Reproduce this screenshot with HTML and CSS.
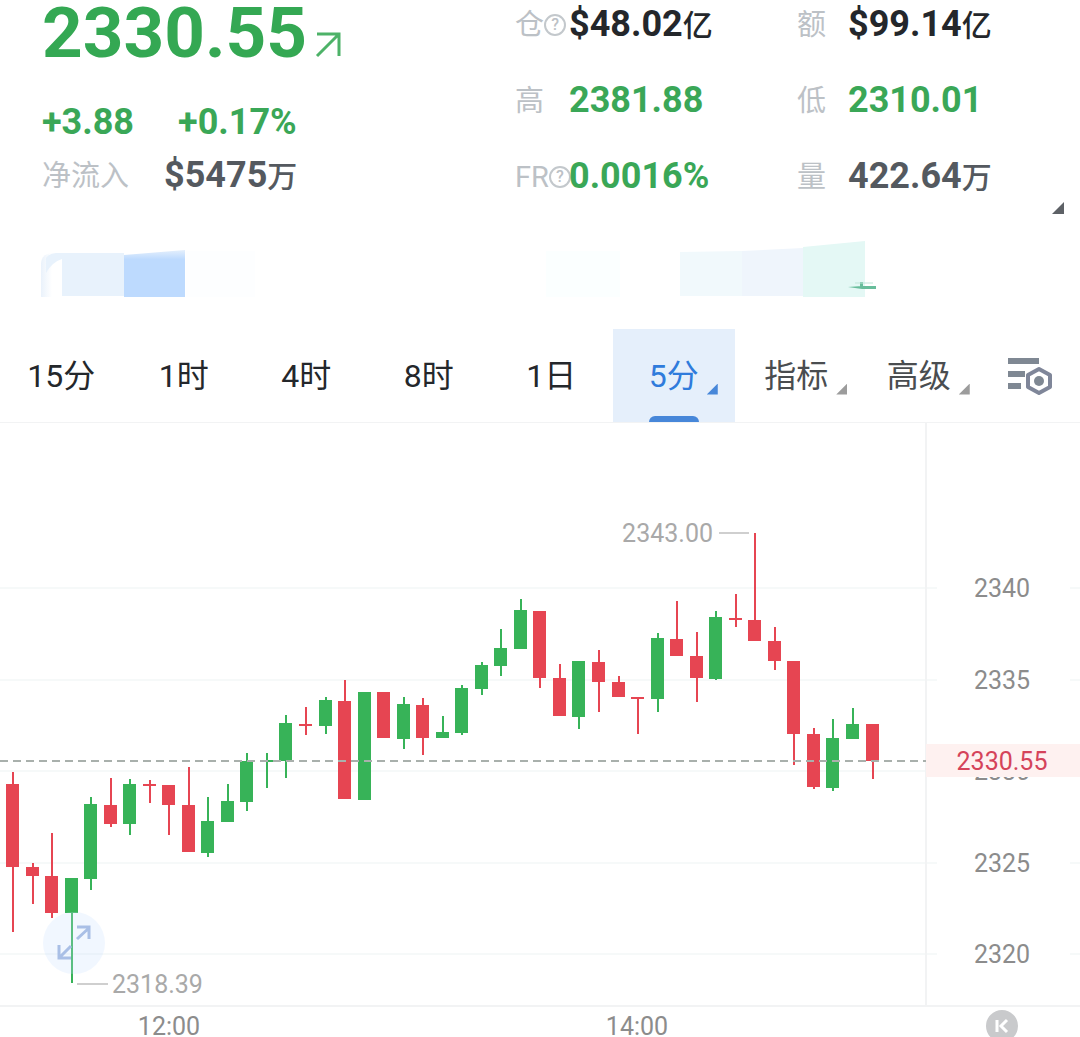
FILE: index.html
```html
<!DOCTYPE html>
<html lang="zh-CN">
<head>
  <meta charset="UTF-8" />
  <meta name="viewport" content="width=device-width, initial-scale=1" />
  <title>行情 2330.55</title>
  <link rel="stylesheet" href="styles.css">
</head>
<body>

  <!-- Quote -->
  <header class="quote">
    <div class="summary">
      <h1 class="price">2330.55
        <svg class="trend" viewBox="0 0 26 26" aria-hidden="true"><path d="M2 24 L23 3 M2 2 H24 V24" /></svg>
      </h1>
      <p class="change"><span>+3.88</span><span>+0.17%</span></p>
      <p class="inflow"><span class="label">净流入</span><span class="value muted">$5475<small>万</small></span></p>
    </div>

    <dl class="stats">
      <div class="stat"><dt class="label">仓<span class="help">?</span></dt><dd class="value">$48.02<small>亿</small></dd></div>
      <div class="stat"><dt class="label">高</dt><dd class="value up">2381.88</dd></div>
      <div class="stat"><dt class="label">FR<span class="help">?</span></dt><dd class="value up">0.0016%</dd></div>
    </dl>

    <dl class="stats narrow">
      <div class="stat"><dt class="label">额</dt><dd class="value">$99.14<small>亿</small></dd></div>
      <div class="stat"><dt class="label">低</dt><dd class="value up">2310.01</dd></div>
      <div class="stat"><dt class="label">量</dt><dd class="value muted">422.64<small>万</small></dd></div>
    </dl>
  </header>

  <div class="more">
    <button class="more-btn" type="button" aria-label="更多"></button>
  </div>

  <svg class="strip" viewBox="0 0 1080 80" aria-hidden="true">
    <defs>
      <linearGradient id="edge" x1="0" x2="1">
        <stop offset="0" stop-color="#eaf2fb" />
        <stop offset="0.5" stop-color="#fff" />
      </linearGradient>
      <linearGradient id="fold" x1="0" y1="0" x2="0" y2="1">
        <stop offset="0" stop-color="#e4effc" />
        <stop offset="0.2" stop-color="#bddafe" />
      </linearGradient>
    </defs>
    <path d="M41 66 V32 Q42 22 54 22 H63 V66 Z" fill="url(#edge)" />
    <path d="M46 27 Q50 22 56 22 H124 V65 H62 V28 Q52 31 46 42 Z" fill="#e8f2fc" />
    <path d="M124 24 L185 19 V66 H124 Z" fill="url(#fold)" />
    <path d="M186 20 H255 V66 H186 Z" fill="#fdfeff" />
    <path d="M546 20 H620 V66 H546 Z" fill="#fbffff" />
    <path d="M680 21 L742 20 V65 H680 Z" fill="#f1f9fc" />
    <path d="M742 20 L803 17 V65 H742 Z" fill="#eff5fc" />
    <path d="M803 16 L865 10 V66 H803 Z" fill="#e4f8f5" />
    <path d="M848 56 L862 55 H876 V58 H862 Z M860 51 H863 V56 H860 Z" fill="#68bd9b" />
    <path d="M855 52 H873" stroke="#bfe5d8" />
  </svg>

  <!-- Intervals -->
  <nav class="tabs">
    <button class="tab" type="button">15分</button>
    <button class="tab" type="button">1时</button>
    <button class="tab" type="button">4时</button>
    <button class="tab" type="button">8时</button>
    <button class="tab" type="button">1日</button>
    <button class="tab active" type="button"><span class="drop">5分</span></button>
    <button class="tab menu" type="button"><span class="drop">指标</span></button>
    <button class="tab menu" type="button"><span class="drop">高级</span></button>
    <button class="tab settings" type="button" aria-label="设置">
      <svg viewBox="0 0 46 40" aria-hidden="true">
        <path d="M1 2 H32 V8 H1 Z M1 15 H18 V21 H1 Z M1 27 H14 V33 H1 Z" fill="#7f8893" />
        <path d="M32 13 L43 19 V31 L32 37 L21 31 V19 Z" fill="#fff" stroke="#7f8699" stroke-width="4" stroke-linejoin="round" />
        <circle cx="32" cy="25" r="5" fill="#7f8893" />
      </svg>
    </button>
  </nav>

  <!-- Candles -->
  <main class="chart">
    <svg class="plot" viewBox="0 0 1080 614" role="img" aria-label="5分K线">
      <path class="grid" d="M0 165 H937 M0 257 H937 M0 348 H926 M0 440 H937 M0 531 H937 M1070 165 H1080 M1070 257 H1080 M1070 440 H1080 M1070 531 H1080" />
      <path class="frame" d="M926 0 V583 M0 583 H1080" />
      <g id="candles"></g>
      <path class="last-line" d="M0 338 H926" />

      <path class="pointer" d="M719 110 H749 M77 561 H108" />
      <text class="mark" x="713" y="119" text-anchor="end">2343.00</text>
      <text class="mark" x="112" y="570">2318.39</text>

      <g class="axis">
        <text x="1002" y="174">2340</text>
        <text x="1002" y="266">2335</text>
        <text x="1002" y="357">2330</text>
        <text x="1002" y="449">2325</text>
        <text x="1002" y="540">2320</text>
        <text x="169" y="612">12:00</text>
        <text x="637" y="612">14:00</text>
      </g>

      <rect class="last-bg" x="926" y="321" width="154" height="33" />
      <text class="last" x="1002" y="347">2330.55</text>
    </svg>

    <button class="expand" type="button" aria-label="全屏">
      <svg viewBox="0 0 62 62" aria-hidden="true"><path d="M34 27 L46 16 M34 15 H46 V27 M28 34 L17 45 M16 33 V46 H28" /></svg>
    </button>
    <button class="latest" type="button" aria-label="最新">
      <svg viewBox="0 0 32 32" aria-hidden="true"><path d="M11 10 V22 M21 10 L15 16 L21 22" /></svg>
    </button>
  </main>

  <script src="chart.js"></script>
</body>
</html>
```

FILE: styles.css
```css
* {
  box-sizing: border-box;
}

body {
  margin: 0;
  background: #fff;
  color: #24272b;
  font-family: Roboto, "Noto Sans CJK SC", sans-serif;
  overflow-x: hidden;
}

h1, p, dl, dd {
  margin: 0;
}

button {
  border: none;
  padding: 0;
  background: none;
  color: inherit;
  font-family: inherit;
  cursor: pointer;
}

/* Quote */
.quote {
  display: grid;
  grid-template-columns: 473fr 282fr 241fr;
  padding: 0 42px;
}

.summary {
  display: flex;
  flex-direction: column;
}

.price {
  display: flex;
  align-items: center;
  gap: 8px;
  margin-bottom: 36px;
  font-size: 71px;
  line-height: 66px;
  font-weight: 700;
  color: #34a853;
}

.trend {
  width: 26px;
  height: 26px;
  margin-top: 24px;
  fill: none;
  stroke: #4db268;
  stroke-width: 3;
}

.change {
  display: flex;
  gap: 44px;
  margin-bottom: 13px;
  font-size: 36px;
  line-height: 40px;
  font-weight: 700;
  color: #3aa757;
}

.inflow {
  display: flex;
  gap: 35px;
}

.stats {
  display: flex;
  flex-direction: column;
  gap: 34px;
  padding-top: 4px;
}

.stat {
  display: grid;
  grid-template-columns: 54px 1fr;
}

.narrow .stat {
  grid-template-columns: 51px 1fr;
}

.label {
  display: flex;
  align-items: center;
  font-size: 29px;
  line-height: 42px;
  font-weight: 400;
  color: #bcc1c6;
}

.help {
  flex: none;
  width: 22px;
  height: 22px;
  border: 2px solid #c3c8cc;
  border-radius: 50%;
  font-size: 16px;
  line-height: 18px;
  font-weight: 500;
  text-align: center;
}

.value {
  font-size: 36px;
  line-height: 40px;
  height: 40px;
  font-weight: 700;
  white-space: nowrap;
}

.value small {
  font-size: 30px;
  font-weight: 500;
}

.up {
  color: #3aa757;
}

.muted {
  color: #54595f;
}

.more {
  display: flex;
  justify-content: flex-end;
  padding: 4px 16px 17px;
}

.more-btn {
  width: 12px;
  height: 12px;
  background: #5d6166;
  clip-path: polygon(100% 0, 100% 100%, 0 100%);
}

.strip {
  display: block;
  width: 100%;
}

/* Intervals */
.tabs {
  display: grid;
  grid-template-columns: repeat(8, 1fr) 100px;
  margin-top: 18px;
  border-bottom: 1px solid #f2f3f4;
}

.tab {
  position: relative;
  height: 93px;
  font-size: 32px;
  line-height: 40px;
}

.tab.menu {
  color: #4a4d50;
}

.tab.active {
  background: #e5effb;
  color: #2f7bdc;
}

.tab.active::after {
  content: "";
  position: absolute;
  left: 36px;
  right: 36px;
  bottom: 0;
  height: 6px;
  border-radius: 6px 6px 0 0;
  background: #4787d9;
}

.drop {
  position: relative;
}

.drop::after {
  content: "";
  position: absolute;
  left: 100%;
  bottom: 0;
  width: 11px;
  height: 11px;
  margin-left: 8px;
  background: #9c9c9c;
  clip-path: polygon(100% 0, 100% 100%, 0 100%);
}

.active .drop::after {
  background: #4787d9;
}

.settings svg {
  display: block;
  width: 46px;
  margin: 0 auto;
}

/* Candles */
.chart {
  position: relative;
  overflow: hidden;
}

.plot {
  display: block;
  width: 100%;
}

.grid, .frame, .pointer, .last-line {
  fill: none;
  stroke-width: 2;
}

.grid {
  stroke: #f6f9f9;
}

.frame {
  stroke: #f2f3f4;
}

.pointer {
  stroke: #cfcfcf;
}

.last-line {
  stroke: #a9b0ac;
  stroke-dasharray: 8 5;
}

.candle-up {
  fill: #37b358;
}

.candle-down {
  fill: #e64552;
}

.mark, .axis, .last {
  font-size: 25px;
}

.mark {
  fill: #a9a9a9;
}

.axis {
  fill: #8c8c8c;
  text-anchor: middle;
}

.last {
  fill: #d5435a;
  text-anchor: middle;
}

.last-bg {
  fill: #fef1f0;
}

.expand {
  position: absolute;
  left: 4%;
  bottom: 63px;
  width: 62px;
  height: 62px;
  border-radius: 50%;
  background: rgba(200, 225, 255, 0.25);
}

.expand path, .latest path {
  fill: none;
  stroke: #a9bfe6;
  stroke-width: 3;
}

.latest {
  position: absolute;
  right: 62px;
  bottom: -5px;
  width: 32px;
  height: 32px;
  border-radius: 50%;
  background: #c9cacc;
}

.latest path {
  stroke: #fff;
}
```

FILE: chart.js
```js
// high, body top, body bottom, low, direction
const candles = [
  [349, 361, 444, 509, 'down'],
  [440, 444, 453, 481, 'down'],
  [410, 453, 490, 495, 'down'],
  [455, 455, 490, 560, 'up'],
  [374, 381, 456, 467, 'up'],
  [355, 382, 401, 404, 'down'],
  [356, 361, 401, 412, 'up'],
  [357, 361, 363, 380, 'down'],
  [362, 362, 382, 412, 'down'],
  [344, 382, 429, 429, 'down'],
  [374, 398, 430, 434, 'up'],
  [361, 378, 399, 399, 'up'],
  [330, 338, 379, 388, 'up'],
  [330, 337, 339, 365, 'up'],
  [292, 300, 338, 355, 'up'],
  [284, 301, 303, 312, 'down'],
  [274, 277, 303, 311, 'up'],
  [257, 278, 376, 376, 'down'],
  [269, 269, 377, 377, 'up'],
  [269, 269, 315, 315, 'down'],
  [274, 281, 316, 326, 'up'],
  [275, 282, 315, 332, 'down'],
  [293, 309, 315, 315, 'up'],
  [262, 265, 310, 312, 'up'],
  [239, 242, 266, 272, 'up'],
  [206, 225, 243, 253, 'up'],
  [176, 187, 226, 226, 'up'],
  [188, 188, 255, 265, 'down'],
  [241, 255, 293, 293, 'down'],
  [238, 238, 294, 306, 'up'],
  [227, 239, 259, 289, 'down'],
  [253, 259, 274, 274, 'down'],
  [274, 274, 276, 311, 'down'],
  [210, 215, 276, 289, 'up'],
  [178, 216, 233, 233, 'down'],
  [209, 233, 255, 279, 'down'],
  [188, 194, 256, 257, 'up'],
  [171, 195, 197, 204, 'down'],
  [110, 197, 218, 218, 'down'],
  [204, 218, 238, 247, 'down'],
  [238, 238, 311, 342, 'down'],
  [305, 311, 364, 366, 'down'],
  [296, 315, 365, 368, 'up'],
  [285, 301, 316, 316, 'up'],
  [301, 301, 338, 356, 'down']
];

const group = document.getElementById('candles');
const step = 859.5 / (candles.length - 1);

function addRect(x, y, width, height, dir) {
  const rect = document.createElementNS('http://www.w3.org/2000/svg', 'rect');
  rect.setAttribute('x', x);
  rect.setAttribute('y', y);
  rect.setAttribute('width', width);
  rect.setAttribute('height', height);
  rect.setAttribute('class', 'candle-' + dir);
  group.appendChild(rect);
}

candles.forEach(([high, top, bottom, low, dir], i) => {
  const x = Math.round(13 + i * step);
  addRect(x - 1, high, 2, low - high, dir);
  addRect(x - 7, top, 13, bottom - top, dir);
});
```
